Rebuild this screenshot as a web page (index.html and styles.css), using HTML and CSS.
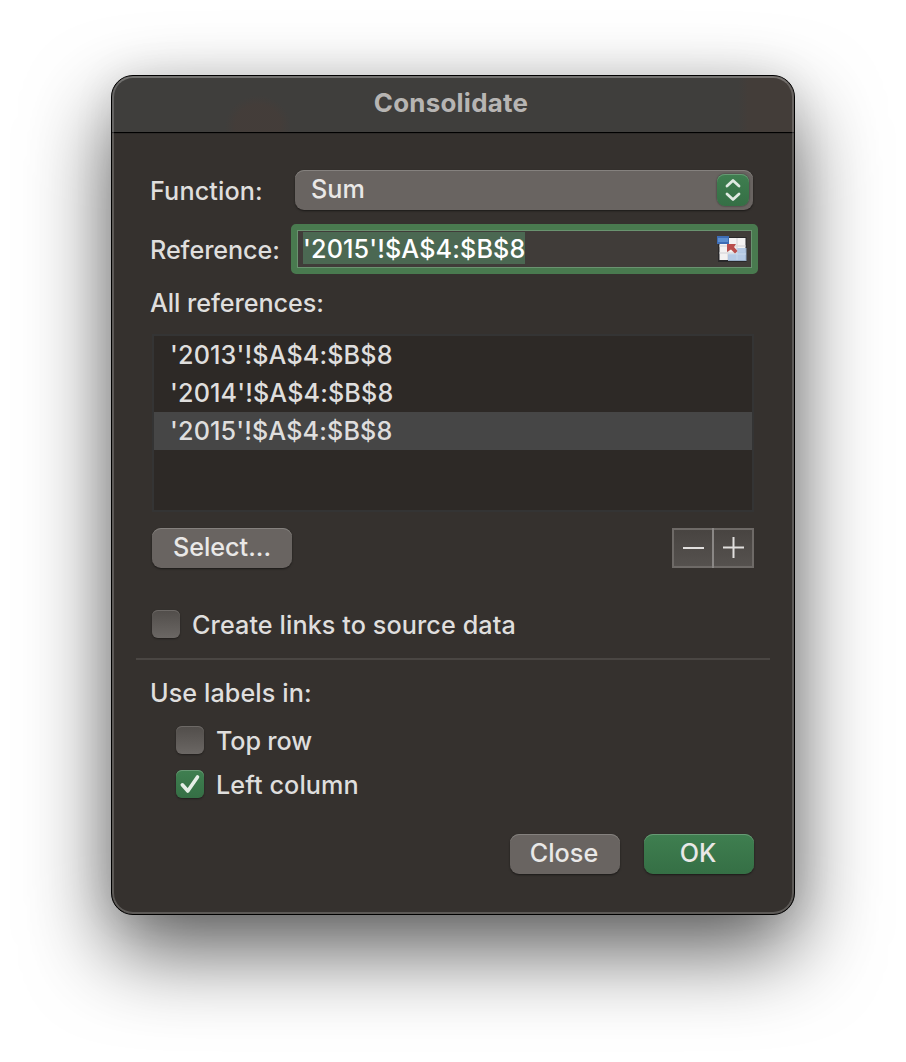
FILE: index.html
```html
<!DOCTYPE html>
<html lang="en">
<head>
<meta charset="utf-8">
<title>Consolidate</title>
<link rel="stylesheet" href="styles.css">
</head>
<body>
<main class="dialog">
  <header class="titlebar"><h1 class="title">Consolidate</h1></header>
  <div class="body">
    <div class="row function-row">
      <span class="label">Function:</span>
      <div class="select"><span>Sum</span>
        <span class="stepper"><svg width="32" height="32" viewBox="0 0 32 32"><path d="M10 12 16 6.500l6 5.500M10 20 16 25.500l6-5.500" /></svg></span>
      </div>
    </div>
    <div class="row reference-row">
      <span class="label">Reference:</span>
      <div class="field"><span class="selection">'2015'!$A$4:$B$8</span>
        <svg class="sheet" width="30" height="26" viewBox="0 0 30 26">
          <rect x="1" y="1" width="28.500" height="25" fill="#29282a"/>
          <rect x="2.500" y="2" width="26" height="22" fill="#f3f2f2"/>
          <path d="M11 2v22M20 2v22M2.500 10h26M2.500 17h26" stroke="#dddcde" stroke-width="1.500"/>
          <path d="M20 12h9.500v13H11v-7h9z" fill="#a9c3e3" opacity=".85"/>
          <path d="M20 12v12M11 18h18" stroke="#c8d8eb"/>
          <rect width="12" height="8" fill="#3d6cb5"/>
          <rect x="1" y="2" width="10" height="4" fill="#5b8ed0"/>
          <path d="M10 8h9l-2 3 3.500 4-2.500 2.500-4-4-4 2.500z" fill="#b94e4c"/>
        </svg>
      </div>
    </div>
    <div class="label all-label">All references:</div>
    <ul class="list">
      <li>'2013'!$A$4:$B$8</li>
      <li>'2014'!$A$4:$B$8</li>
      <li class="active">'2015'!$A$4:$B$8</li>
    </ul>
    <div class="row tools">
      <button class="button b-select"><span>Select...</span></button>
      <div class="segments">
        <button class="segment"><svg width="38" height="36" viewBox="0 0 38 36"><path d="M9 18h21"/></svg></button>
        <button class="segment"><svg width="38" height="36" viewBox="0 0 38 36"><path d="M9 17.500h21M19.500 7v21"/></svg></button>
      </div>
    </div>
    <div class="check links"><span class="box"></span><span>Create links to source data</span></div>
    <div class="rule"></div>
    <div class="label use-label">Use labels in:</div>
    <div class="check nested"><span class="box"></span><span>Top row</span></div>
    <div class="check nested last"><span class="box on"><svg width="28" height="28" viewBox="0 0 28 28"><path d="M6.300 14.800 11.800 21 21.500 7"/></svg></span><span>Left column</span></div>
    <footer class="actions">
      <button class="button b-close"><span>Close</span></button>
      <button class="button primary b-ok"><span>OK</span></button>
    </footer>
  </div>
</main>
</body>
</html>
```
FILE: styles.css
```css
* { box-sizing: border-box; }
body {
  margin: 0;
  padding: 75px 111px 0;
  height: 1062px;
  overflow: hidden;
  background: #fff;
  font-family: Inter, "Liberation Sans", sans-serif;
  font-size: 25.2px;
  font-weight: 450;
  line-height: 30px;
  color: #dfdedd;
  white-space: nowrap;
}
.dialog {
  position: relative;
  width: 684px;
  height: 840px;
  border: 1px solid #000;
  border-radius: 22px;
  background: #35312e;
  overflow: hidden;
  box-shadow: 0 36px 84px rgba(0,0,0,.64), 0 0 40px rgba(0,0,0,.08);
}
/* inner light edge over the title bar and the body */
.dialog::after {
  content: "";
  position: absolute;
  inset: 0;
  border: 2px solid rgba(255,255,255,.2);
  border-top-color: rgba(255,255,255,.27);
  border-radius: 21px;
  pointer-events: none;
}
.titlebar {
  height: 57px;
  border-bottom: 1px solid #000;
  background:
    radial-gradient(ellipse at center, rgba(72,60,55,.5) 50%, transparent 72%) 114px 20px / 64px 60px no-repeat,
    linear-gradient(90deg, transparent, #433d39 10px) 626px 0 / 56px 56px no-repeat,
    #3f3e3c;
}
.title {
  margin: 0;
  padding: 12px 4px 0 0;
  text-align: center;
  font-size: 25.900px;
  font-weight: 700;
  letter-spacing: .25px;
  line-height: 30px;
  color: #b7b5b3;
}
.body { padding: 37px 40px 0 38px; box-shadow: inset 0 1px #2d2a28; }
.row { display: flex; align-items: center; }
.function-row { height: 40px; padding-right: 1px; }
.function-row .label, .reference-row .label { flex: none; }
.function-row .label { width: 145px; padding-top: 2px; letter-spacing: .12px; }
.select {
  flex: 1;
  height: 40px;
  display: flex;
  justify-content: space-between;
  padding: 4px 4px 0 16px;
  line-height: 30px;
  border-radius: 9px;
  background: #696461;
  box-shadow: inset 0 1px #85817e, 0 1px 2px rgba(0,0,0,.5);
  color: #e9e8e7;
}
.stepper {
  width: 32px;
  height: 32px;
  border-radius: 8px;
  background: linear-gradient(#3f7f50, #356f45);
  box-shadow: inset 0 1px #689a75, 0 0 2px rgba(0,0,0,.6);
}
.stepper svg, .sheet, .segment svg, .box svg { display: block; }
.stepper path { fill: none; stroke: #e0eae2; stroke-width: 2.800; stroke-linecap: round; stroke-linejoin: round; }
.reference-row { height: 50px; margin: 14px -4px 0 0; }
.reference-row .label { width: 141px; padding-top: 2px; letter-spacing: -.08px; }
.field {
  flex: 1;
  height: 50px;
  display: flex;
  justify-content: space-between;
  align-items: flex-start;
  padding: 1px 4px 0 6px;
  border: 6px solid #497a4f;
  border-radius: 5px;
  background: #403c39;
  box-shadow: inset 0 0 0 1px #6a9370;
}
.selection { width: 222px; height: 32px; margin-top: 1px; background: #4b6852; line-height: 34px; color: #fff; letter-spacing: .12px; }
.sheet { margin-top: 5px; margin-right: 1px; }
.all-label { height: 30px; margin-top: 14px; letter-spacing: -.06px; }
.list {
  list-style: none;
  margin: 16px 0 0 2px;
  padding: 0;
  height: 178px;
  border: 2px solid #343434;
  background: #2d2926;
}
.list li { height: 38px; padding-left: 16px; line-height: 38px; letter-spacing: .12px; }
.list .active { background: #464646; }
.tools { margin: 16px 0 0 2px; justify-content: space-between; }
.button {
  height: 40px;
  padding: 0 0 3px;
  border: 0;
  border-radius: 9px;
  background: #696461;
  box-shadow: inset 0 1px #85817e, 0 1px 2px rgba(0,0,0,.5);
  color: #e9e8e7;
  font: inherit;
}
.b-select { width: 140px; }
.segments {
  display: flex;
  gap: 2px;
  padding: 2px;
  background: linear-gradient(#8a8785, #8a8785) 40px 0 / 2px 40px no-repeat, #6e6a67;
}
.segment { width: 38px; height: 36px; padding: 0; border: 0; background: linear-gradient(#484441, #55514e); }
.segment path { fill: none; stroke: #e1dfde; stroke-width: 2; }
.check { display: flex; align-items: center; height: 28px; gap: 12px; margin-left: 2px; line-height: 30px; }
.check > span:last-child { padding-top: 1px; }
.links { margin-top: 42px; letter-spacing: .09px; }
.box {
  flex: none;
  width: 28px;
  height: 28px;
  border-radius: 6px;
  background: linear-gradient(#514d4a, #6b6764);
  box-shadow: inset 0 1px #6d6966, 0 1px 2px rgba(0,0,0,.4);
}
.box.on { background: linear-gradient(#3f7f50, #356f45); box-shadow: inset 0 1px #689a75, 0 1px 2px rgba(0,0,0,.4); }
.box path { fill: none; stroke: #e5eee7; stroke-width: 3.600; stroke-linecap: round; stroke-linejoin: round; }
.rule { height: 2px; margin: 20px -16px 0 -14px; background: #4a4643; }
.use-label { height: 30px; margin-top: 18px; letter-spacing: .08px; }
.nested { margin: 18px 0 0 26px; letter-spacing: -.15px; }
.nested.last { margin-top: 16px; letter-spacing: .1px; }
.actions { display: flex; justify-content: flex-end; gap: 24px; margin-top: 36px; }
.b-close, .b-ok { width: 110px; }
.primary { background: linear-gradient(#3f7f50, #356f45); box-shadow: inset 0 1px #689a75, 0 1px 2px rgba(0,0,0,.5); }
.b-close span, .b-ok span { position: relative; left: -1px; }
```
